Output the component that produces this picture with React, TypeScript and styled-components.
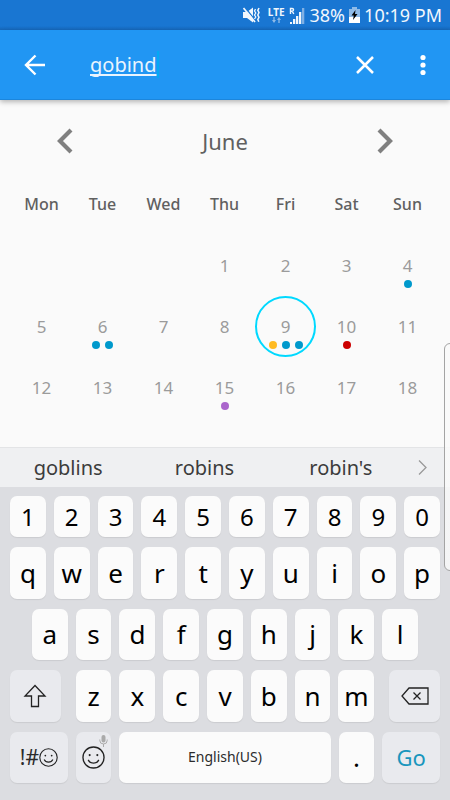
import React, { useState } from "react";
import styled, { createGlobalStyle } from "styled-components";

const GlobalStyle = createGlobalStyle`
  *, *::before, *::after { box-sizing: border-box; }
  html, body, #root { height: 100%; }
  body {
    margin: 0;
    background: #fafafa;
    font-family: "Noto Sans", "Open Sans", sans-serif;
  }
  button, input { font: inherit; color: inherit; border: 0; padding: 0; background: none; }
  svg { display: block; flex: none; }
`;

const Screen = styled.div`
  position: relative;
  display: flex;
  flex-direction: column;
  min-height: 100%;
  overflow: hidden;
`;

const StatusBar = styled.div`
  display: flex;
  align-items: center;
  justify-content: flex-end;
  gap: 4px;
  height: 30px;
  padding: 0 8px;
  background: linear-gradient(#1976d2 26px, #1669bd);
  color: #f1f7fd;
  font-size: 18px;
  line-height: 30px;
  white-space: nowrap;
`;

const Network = styled.div`
  display: flex;
  flex-direction: column;
  align-items: center;
  margin-left: 4px;
  font-size: 10px;
  font-weight: 700;
  line-height: 10px;
`;

const Percent = styled.span`
  margin-left: 1px;
`;

const AppBar = styled.header`
  display: flex;
  align-items: center;
  height: 70px;
  padding: 0 12px;
  background: #2196f3;
  border-bottom: 1px solid #1c86dc;
  box-shadow: 0 2px 5px rgba(0, 0, 0, 0.28);
  color: #fff;
  z-index: 1;
`;

const IconButton = styled.button`
  display: grid;
  place-items: center;
  flex: none;
  width: 46px;
  height: 46px;
  cursor: pointer;
`;

const SearchField = styled.label`
  display: flex;
  align-items: center;
  flex: 1;
  min-width: 0;
  padding-left: 32px;
`;

const SearchInput = styled.input`
  field-sizing: content;
  height: 30px;
  font-size: 20px;
  color: #e9f4fe;
  text-decoration: underline;
  text-decoration-thickness: 2px;
  text-underline-offset: 2px;
  text-decoration-skip-ink: none;
  outline: none;
`;

const Caret = styled.span`
  width: 2px;
  height: 27px;
  background: #03a9f4;
`;

const Actions = styled.div`
  display: flex;
  gap: 12px;
  margin-right: -8px;
`;

const Calendar = styled.main`
  padding: 10px 12px 29px 11px;
  color: #606060;
`;

const MonthBar = styled.div`
  display: flex;
  align-items: center;
  justify-content: space-between;
  height: 62px;
  padding: 0 30px 0 31px;
`;

const MonthTitle = styled.h1`
  margin: 0;
  font-size: 22px;
  font-weight: 400;
  line-height: 30px;
`;

const MonthTable = styled.table`
  width: 100%;
  table-layout: fixed;
  border-collapse: collapse;
`;

const WeekdayCell = styled.th`
  height: 63px;
  padding: 0;
  font-size: 16px;
  font-weight: 500;
  line-height: 24px;
`;

const DayCell = styled.td`
  height: 61px;
  padding: 0;
`;

const DayButton = styled.button<{ $selected: boolean }>`
  display: flex;
  flex-direction: column;
  align-items: center;
  gap: 2px;
  width: 61px;
  height: 61px;
  margin: 0 auto;
  padding-top: 17px;
  border: 2px solid ${(p) => (p.$selected ? "#00d9ff" : "transparent")};
  border-radius: 50%;
  color: #9b9b9b;
  font-size: 17px;
  line-height: 24px;
  cursor: pointer;
`;

const Dots = styled.span`
  display: flex;
  gap: 5px;
`;

const Dot = styled.span<{ $color: string }>`
  width: 8px;
  height: 8px;
  border-radius: 50%;
  background: ${(p) => p.$color};
`;

const Suggestions = styled.div`
  display: grid;
  grid-template-columns: repeat(3, 1fr) 28px;
  height: 40px;
  padding-right: 13px;
  border-top: 1px solid #e3e4e6;
  background: #eff0f2;
`;

const Suggestion = styled.button`
  display: grid;
  place-items: center;
  color: #3c3c3c;
  font-size: 20px;
  line-height: 28px;
  cursor: pointer;
`;

const Keyboard = styled.div`
  display: grid;
  flex: 1;
  grid-template-rows: 41px repeat(4, minmax(44px, 1fr));
  gap: 10px;
  padding: 9px 10px 17px;
  background: #dcdde1;
`;

const KeyRow = styled.div<{ $inset?: boolean }>`
  display: grid;
  grid-template-columns: repeat(20, minmax(0, 1fr));
  column-gap: 8px;

  & > :first-child {
    grid-column-start: ${(p) => (p.$inset ? 2 : 1)};
  }
`;

type KeyTone = "letter" | "digit" | "special" | "accent" | "space";

const keySize: Record<KeyTone, number> = {
  letter: 26,
  digit: 24,
  special: 21,
  accent: 22,
  space: 14,
};

const Key = styled.button<{ $tone: KeyTone; $span?: number; $gap?: "left" | "right" }>`
  display: flex;
  align-items: center;
  justify-content: center;
  grid-column-end: span ${(p) => p.$span ?? 2};
  margin-left: ${(p) => (p.$gap === "left" ? 7 : 0)}px;
  margin-right: ${(p) => (p.$gap === "right" ? 7 : 0)}px;
  border-radius: 7px;
  background: ${(p) => (p.$tone === "special" || p.$tone === "accent" ? "#e9eaee" : "#fbfbfb")};
  box-shadow: 0 1px 1px rgba(0, 0, 0, 0.08);
  color: ${(p) => (p.$tone === "accent" ? "#1996bd" : p.$tone === "special" || p.$tone === "space" ? "#2b2b2b" : "#000")};
  font-size: ${(p) => keySize[p.$tone]}px;
  line-height: 32px;
  cursor: pointer;
`;

const EmojiKey = styled(Key)`
  position: relative;
`;

const MicHint = styled.span`
  position: absolute;
  top: 3px;
  right: 3px;
`;

const EdgePanel = styled.div`
  position: absolute;
  top: 343px;
  right: -8px;
  width: 14px;
  height: 228px;
  border: 1px solid #a4a4a4;
  border-radius: 6px;
  background: linear-gradient(rgba(250, 250, 250, 0.9), rgba(250, 250, 250, 0.8));
`;

const MutedIcon = () => (
  <svg width="17" height="18" viewBox="0 0 17 18" aria-hidden="true">
    <path d="M0 6h4L10 1.500v15L4 12H0z" fill="#f1f7fd" />
    <path d="M2 1.500 13 15" stroke="#1976d2" strokeWidth="1.300" />
    <path d="M.5 2 12 16" stroke="#f1f7fd" strokeWidth="1.700" />
    <path d="M12.500 3l-1 2 1.300 2-1.300 2 1.300 2-1.300 2" fill="none" stroke="#f1f7fd" strokeWidth="1.300" />
    <path d="M16 2l-1.200 2.300 1.200 2.300-1.200 2.400 1.200 2.300-1.200 2.300 1 2.200" fill="none" stroke="#f1f7fd" strokeWidth="1.500" />
  </svg>
);

const TrafficIcon = () => (
  <svg width="9" height="6" viewBox="0 0 9 6" aria-hidden="true">
    <path d="M2 0v4M7 6V2" stroke="#8fbbe8" strokeWidth="1.300" />
    <path d="M0 3h4L2 6zM5 3h4L7 0z" fill="#8fbbe8" />
  </svg>
);

const SignalIcon = () => (
  <svg width="16" height="17" viewBox="0 0 16 17" aria-hidden="true">
    <path d="M1.500 7V1.500h1.700a1.300 1.300 0 0 1 0 2.700H1.500M3.200 4.200 4.800 7" fill="none" stroke="#f1f7fd" strokeWidth="1.400" />
    <path d="M1 15h2v2H1zM4 12h2.300v5H4zM7 9h2.300v8H7zM10 5h2.300v12H10z" fill="#f1f7fd" />
    <path d="M13 1h2.300v16H13z" fill="#7fb0e4" />
  </svg>
);

const BatteryIcon = () => (
  <svg width="11" height="16" viewBox="0 0 11 16" aria-hidden="true">
    <path d="M3 0h5v2h3v8H0V2h3z" fill="#8fbbe8" />
    <path d="M0 10h11v6H0z" fill="#fff" />
    <path d="M6.500 3 2.500 8.500h2.300L4 13l4.500-6H6z" fill="#000" />
  </svg>
);

const BackIcon = () => (
  <svg width="22" height="22" viewBox="0 0 22 22" fill="none" stroke="currentColor" strokeWidth="2.400" aria-hidden="true">
    <path d="M21 11H2.500M11.500 1.500 2 11l9.500 9.500" />
  </svg>
);

const CloseIcon = () => (
  <svg width="20" height="20" viewBox="0 0 20 20" stroke="currentColor" strokeWidth="2.500" aria-hidden="true">
    <path d="m2 2 16 16M18 2 2 18" />
  </svg>
);

const MoreIcon = () => (
  <svg width="6" height="22" viewBox="0 0 6 22" fill="currentColor" aria-hidden="true">
    <circle cx="3" cy="3.500" r="2.600" />
    <circle cx="3" cy="11" r="2.600" />
    <circle cx="3" cy="18.500" r="2.600" />
  </svg>
);

const MonthArrow = ({ next }: { next?: boolean }) => (
  <svg width="16" height="26" viewBox="0 0 16 26" fill="none" stroke="#808080" strokeWidth="4.200" aria-hidden="true">
    <path d={next ? "M2 2l11 11L2 24" : "M14 2 3 13l11 11"} />
  </svg>
);

const MoreSuggestionsIcon = () => (
  <svg width="9" height="15" viewBox="0 0 9 15" fill="none" stroke="#999" strokeWidth="1.300" aria-hidden="true">
    <path d="m1 .5 7 7-7 7" />
  </svg>
);

const ShiftIcon = () => (
  <svg width="24" height="24" viewBox="0 0 24 24" fill="none" stroke="#222" strokeWidth="1.300" aria-hidden="true">
    <path d="M12 1.500 22 12h-6.500v10.500h-7V12H2z" />
  </svg>
);

const BackspaceIcon = () => (
  <svg width="28" height="18" viewBox="0 0 28 18" fill="none" stroke="#222" strokeWidth="1.300" aria-hidden="true">
    <path d="M8 1h19v16H8L1 9zM12.500 5.500l7 7M19.500 5.500l-7 7" />
  </svg>
);

const SmileIcon = ({ size }: { size: number }) => (
  <svg width={size} height={size} viewBox="0 0 24 24" fill="none" stroke="#222" strokeWidth="1.400" aria-hidden="true">
    <circle cx="12" cy="12" r="11" />
    <path d="M6.500 14.500c2 4.500 9 4.500 11 0" />
    <circle cx="8" cy="9.500" r="1.100" fill="#222" stroke="none" />
    <circle cx="16" cy="9.500" r="1.100" fill="#222" stroke="none" />
  </svg>
);

const MicIcon = () => (
  <svg width="9" height="12" viewBox="0 0 9 12" aria-hidden="true">
    <rect x="2.500" y="0" width="4" height="7.500" rx="2" fill="#aaa" />
    <path d="M.8 4.500v1a3.700 3.500 0 0 0 7.400 0v-1M4.500 9v3" fill="none" stroke="#aaa" />
  </svg>
);

const BLUE = "#0099cc";
const weekdays = ["Mon", "Tue", "Wed", "Thu", "Fri", "Sat", "Sun"];
const weeks: (number | null)[][] = [
  [null, null, null, 1, 2, 3, 4],
  [5, 6, 7, 8, 9, 10, 11],
  [12, 13, 14, 15, 16, 17, 18],
];
const events: Record<number, string[]> = {
  4: [BLUE],
  6: [BLUE, BLUE],
  9: ["#ffbb22", BLUE, BLUE],
  10: ["#cc0000"],
  15: ["#aa66cc"],
};

export default function App() {
  const [query, setQuery] = useState("gobind");
  const [selected, setSelected] = useState(9);
  const type = (text: string) => setQuery((q) => q + text);
  const letters = (row: string, tone: KeyTone = "letter") =>
    row.split("").map((c) => (
      <Key key={c} type="button" $tone={tone} onClick={() => type(c)}>
        {c}
      </Key>
    ));

  return (
    <>
      <GlobalStyle />
      <Screen>
        <StatusBar>
          <MutedIcon />
          <Network>
            LTE
            <TrafficIcon />
          </Network>
          <SignalIcon />
          <Percent>38%</Percent>
          <BatteryIcon />
          <span>10:19 PM</span>
        </StatusBar>

        <AppBar>
          <IconButton type="button" aria-label="Back">
            <BackIcon />
          </IconButton>
          <SearchField>
            <SearchInput
              aria-label="Search"
              value={query}
              spellCheck={false}
              onChange={(e) => setQuery(e.target.value)}
            />
            <Caret />
          </SearchField>
          <Actions>
            <IconButton type="button" aria-label="Clear" onClick={() => setQuery("")}>
              <CloseIcon />
            </IconButton>
            <IconButton type="button" aria-label="More options">
              <MoreIcon />
            </IconButton>
          </Actions>
        </AppBar>

        <Calendar>
          <MonthBar>
            <IconButton type="button" aria-label="Previous month">
              <MonthArrow />
            </IconButton>
            <MonthTitle>June</MonthTitle>
            <IconButton type="button" aria-label="Next month">
              <MonthArrow next />
            </IconButton>
          </MonthBar>
          <MonthTable>
            <thead>
              <tr>
                {weekdays.map((d) => (
                  <WeekdayCell key={d} scope="col">
                    {d}
                  </WeekdayCell>
                ))}
              </tr>
            </thead>
            <tbody>
              {weeks.map((week, i) => (
                <tr key={i}>
                  {week.map((day, j) => (
                    <DayCell key={j}>
                      {day !== null && (
                        <DayButton type="button" $selected={day === selected} onClick={() => setSelected(day)}>
                          {day}
                          <Dots>
                            {(events[day] ?? []).map((color, k) => (
                              <Dot key={k} $color={color} />
                            ))}
                          </Dots>
                        </DayButton>
                      )}
                    </DayCell>
                  ))}
                </tr>
              ))}
            </tbody>
          </MonthTable>
        </Calendar>

        <Suggestions>
          {["goblins", "robins", "robin's"].map((word) => (
            <Suggestion key={word} type="button" onClick={() => setQuery(word)}>
              {word}
            </Suggestion>
          ))}
          <Suggestion type="button" aria-label="More suggestions">
            <MoreSuggestionsIcon />
          </Suggestion>
        </Suggestions>

        <Keyboard>
          <KeyRow>{letters("1234567890", "digit")}</KeyRow>
          <KeyRow>{letters("qwertyuiop")}</KeyRow>
          <KeyRow $inset>{letters("asdfghjkl")}</KeyRow>
          <KeyRow>
            <Key type="button" $tone="special" $span={3} $gap="right" aria-label="Shift">
              <ShiftIcon />
            </Key>
            {letters("zxcvbnm")}
            <Key
              type="button"
              $tone="special"
              $span={3}
              $gap="left"
              aria-label="Backspace"
              onClick={() => setQuery((q) => q.slice(0, -1))}
            >
              <BackspaceIcon />
            </Key>
          </KeyRow>
          <KeyRow>
            <Key type="button" $tone="special" $span={3} aria-label="!# Symbols">
              !#
              <SmileIcon size={19} />
            </Key>
            <EmojiKey type="button" $tone="special" aria-label="Emoji">
              <SmileIcon size={23} />
              <MicHint>
                <MicIcon />
              </MicHint>
            </EmojiKey>
            <Key type="button" $tone="space" $span={10} onClick={() => type(" ")}>
              English(US)
            </Key>
            {letters(".")}
            <Key type="button" $tone="accent" $span={3}>
              Go
            </Key>
          </KeyRow>
        </Keyboard>
        <EdgePanel />
      </Screen>
    </>
  );
}
